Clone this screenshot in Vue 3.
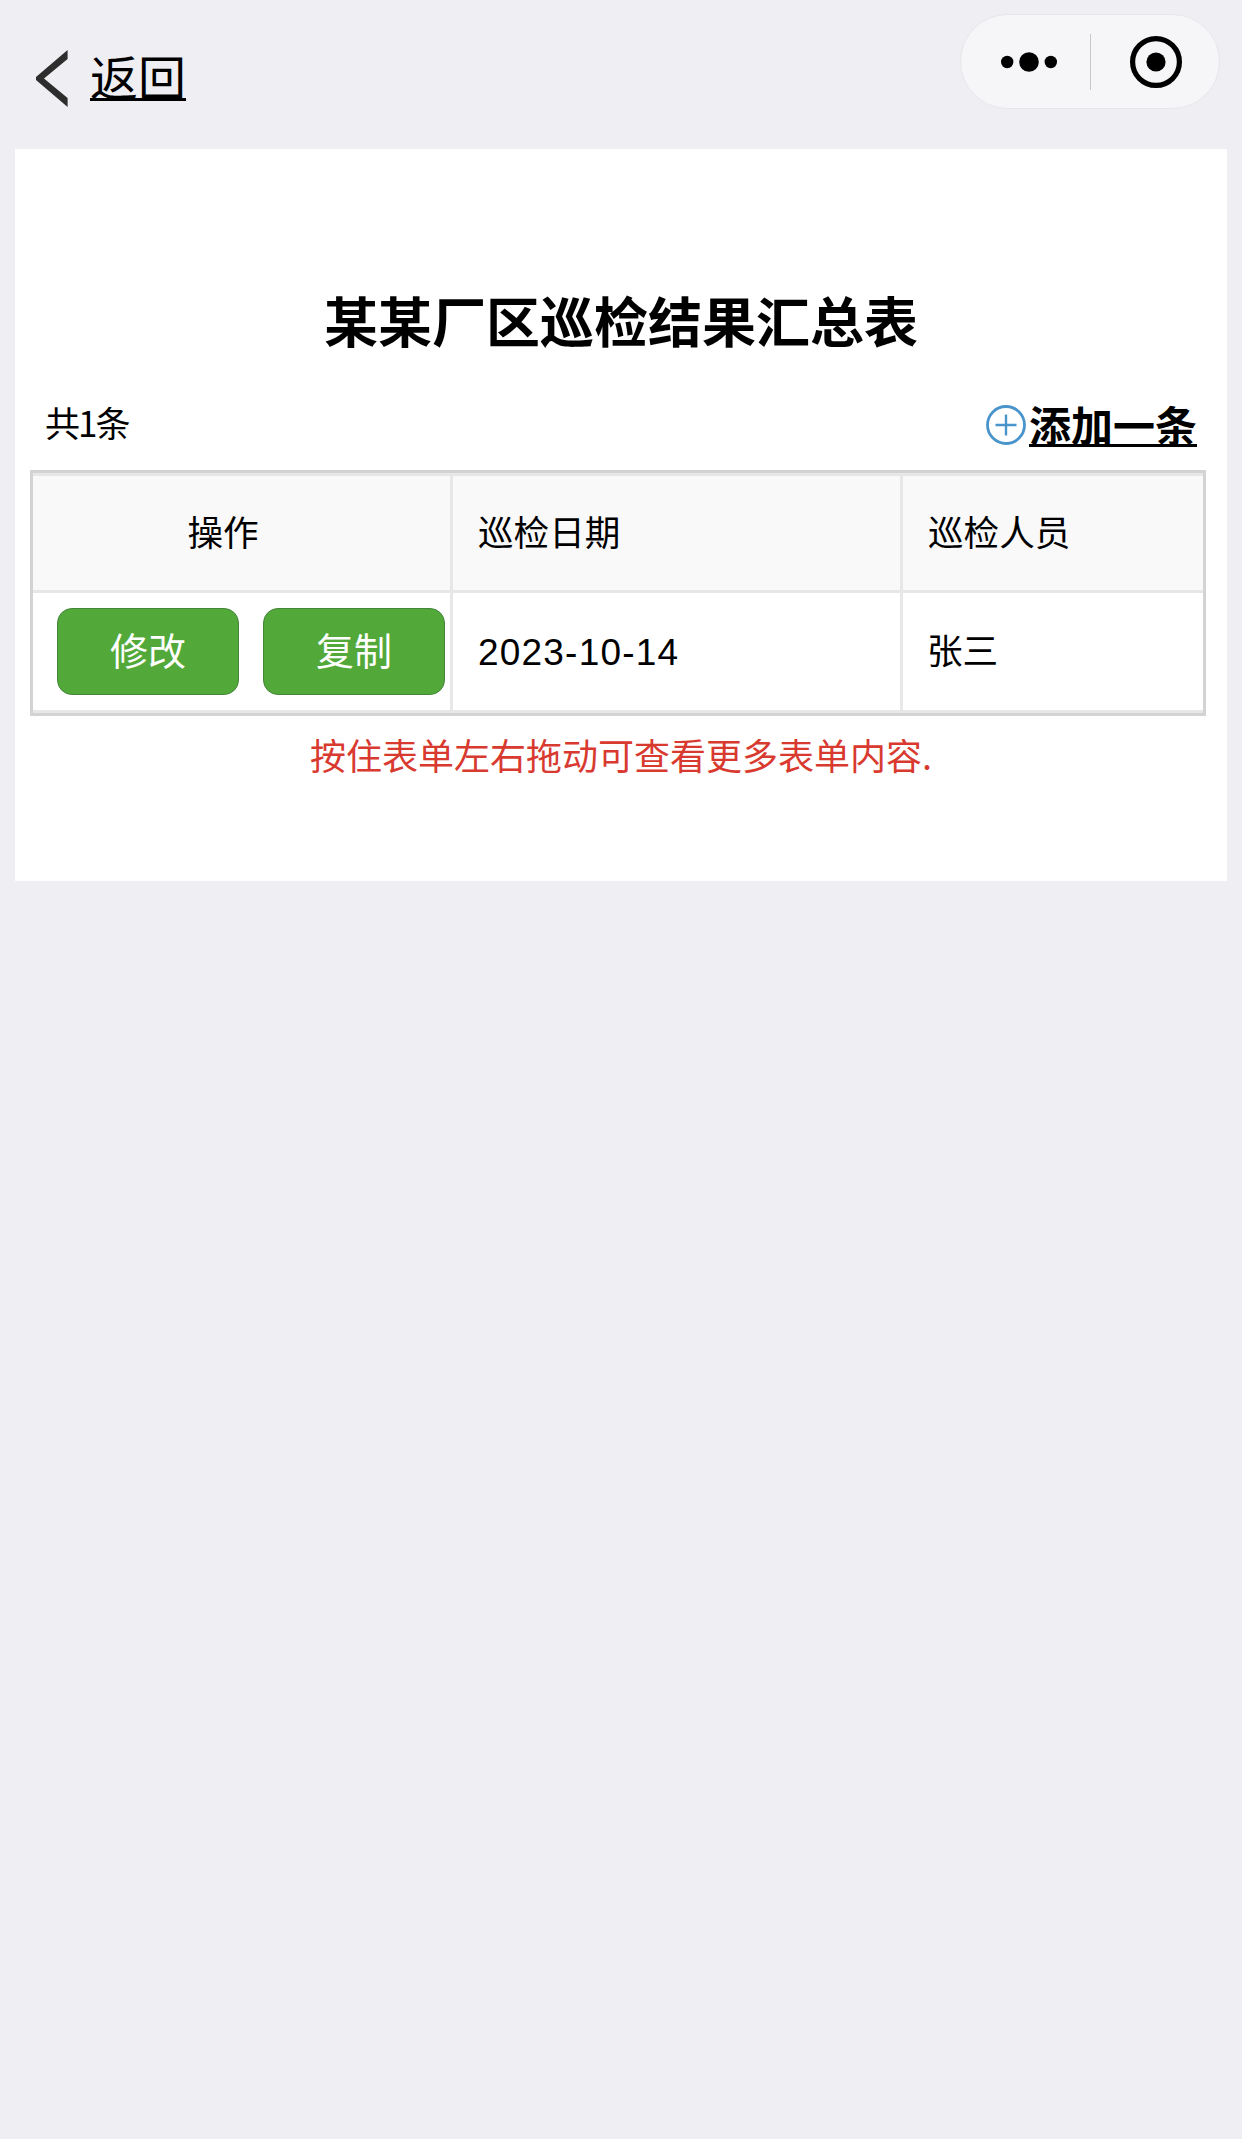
<script setup>
const rows = [{ date: '2023-10-14', name: '张三' }]
</script>

<template>
  <div class="page">
    <header class="nav">
      <a class="back">
        <svg class="chev" width="32" height="57" viewBox="0 0 32 57">
          <path d="M31.6 0V9L8 28.5 31.6 48V57L0 30V27Z" fill="#2d2d2d" />
        </svg>
        <span class="back-text">返回</span>
      </a>
      <div class="capsule">
        <svg class="dots" width="56" height="22" viewBox="0 0 56 22">
          <circle cx="6.2" cy="11" r="6.2" fill="#000" />
          <circle cx="28" cy="11" r="9.8" fill="#000" />
          <circle cx="49.8" cy="11" r="6.2" fill="#000" />
        </svg>
        <i class="divider"></i>
        <svg class="rec" width="52" height="52" viewBox="0 0 52 52">
          <circle cx="26" cy="26" r="23.4" fill="none" stroke="#000" stroke-width="5.2" />
          <circle cx="26" cy="26" r="9.6" fill="#000" />
        </svg>
      </div>
    </header>

    <main class="card">
      <h1 class="title">某某厂区巡检结果汇总表</h1>
      <div class="bar">
        <span class="count">共1条</span>
        <a class="add">
          <svg class="plus" width="40" height="40" viewBox="0 0 40 40">
            <circle cx="20" cy="20" r="18.5" fill="none" stroke="#4a94cc" stroke-width="2.8" />
            <path d="M9.5 20H30.5M20 9.5V30.5" fill="none" stroke="#4a94cc" stroke-width="2.4" />
          </svg>
          <span class="add-text">添加一条</span>
        </a>
      </div>
      <div class="table-wrap">
        <table class="table">
          <colgroup>
            <col class="c1" /><col class="c2" /><col class="c3" />
          </colgroup>
          <thead>
            <tr>
              <th class="op">操作</th>
              <th>巡检日期</th>
              <th class="last">巡检人员</th>
            </tr>
          </thead>
          <tbody>
            <tr v-for="r in rows" :key="r.date">
              <td class="btns">
                <div class="btn-row">
                  <button class="btn">修改</button>
                  <button class="btn">复制</button>
                </div>
              </td>
              <td class="date">{{ r.date }}</td>
              <td class="last name">{{ r.name }}</td>
            </tr>
          </tbody>
        </table>
      </div>
      <p class="hint">按住表单左右拖动可查看更多表单内容.</p>
    </main>
  </div>
</template>

<style>
html, body { margin: 0; background: #eeeef3; }
</style>

<style scoped>
.page {
  width: 1242px;
  height: 2139px;
  background: #eeeef3;
  font-family: "Noto Sans CJK SC", "Noto Sans", sans-serif;
  color: #000;
  overflow: hidden;
}
.nav {
  height: 149px;
  box-sizing: border-box;
  display: flex;
  justify-content: space-between;
  align-items: flex-start;
  padding: 14px 22px 0 36px;
}
.back { display: flex; align-items: flex-start; padding-top: 36px; }
.chev { display: block; }
.back-text {
  margin-left: 22px;
  margin-top: -3px;
  font-size: 48px;
  line-height: 56px;
  text-decoration: underline;
  text-decoration-thickness: 2.5px;
  text-underline-offset: 2px;
}
.capsule {
  width: 260px;
  height: 95px;
  box-sizing: border-box;
  background: #f6f6f9;
  border: 1px solid #e7e7ea;
  border-radius: 47.5px;
  display: flex;
  align-items: center;
}
.dots { margin-left: 40px; }
.divider { width: 1px; height: 56px; background: #c9c9cb; margin-left: 33px; }
.rec { margin-left: 39px; }
.card {
  margin: 0 15px;
  height: 732px;
  box-sizing: border-box;
  background: #fff;
  padding-top: 139px;
}
.title {
  margin: 0;
  text-align: center;
  font-size: 54px;
  line-height: 64px;
  font-weight: 700;
}
.bar {
  margin-top: 37px;
  height: 64px;
  padding: 0 30px 0 30px;
  display: flex;
  justify-content: space-between;
  align-items: center;
}
.count { font-size: 35px; line-height: 50px; letter-spacing: -2px; padding-top: 2px; }
.add { display: flex; align-items: center; padding-top: 5px; }
.plus { display: block; margin-top: 2px; }
.add-text {
  font-size: 42px;
  line-height: 56px;
  font-weight: 700;
  text-decoration: underline;
  text-decoration-thickness: 3px;
  margin-left: 3px;
}
.table-wrap {
  margin: 17px 21px 0 15px;
  border: solid #d3d3d5;
  border-width: 3px;
}
.table {
  width: 100%;
  table-layout: fixed;
  border-collapse: separate;
  border-spacing: 0;
}
.c1 { width: 420px; }
.c2 { width: 450px; }
th, td {
  font-size: 35.6px;
  font-weight: 400;
  text-align: left;
  padding: 0 0 0 25px;
  border-right: 3px solid #e7e7e7;
  border-bottom: 3px solid #e7e7e7;
}
th {
  height: 108px;
  background: #f9f9f9;
  border-top: 3px solid #e7e7e7;
  padding-bottom: 6px;
}
th.op { text-align: center; padding-left: 0; padding-right: 37px; }
th.last, td.last { border-right: 0; }
td.btns { padding: 0; height: 117px; }
td.name { padding-bottom: 7px; padding-left: 24px; }
.btn-row { display: flex; gap: 24px; padding-left: 24px; }
.btn {
  width: 182px;
  height: 87px;
  box-sizing: border-box;
  padding: 0 0 6px;
  background: #52a939;
  border: 1px solid #44853a;
  border-radius: 15px;
  color: #fff;
  font-family: inherit;
  font-size: 38px;
}
td.date {
  font-family: "Liberation Sans", sans-serif;
  font-size: 37px;
  letter-spacing: 1.2px;
  padding-top: 2px;
}
.hint {
  margin: 13px 0 0;
  text-align: center;
  color: #d93a30;
  font-size: 36px;
  line-height: 50px;
}
</style>
